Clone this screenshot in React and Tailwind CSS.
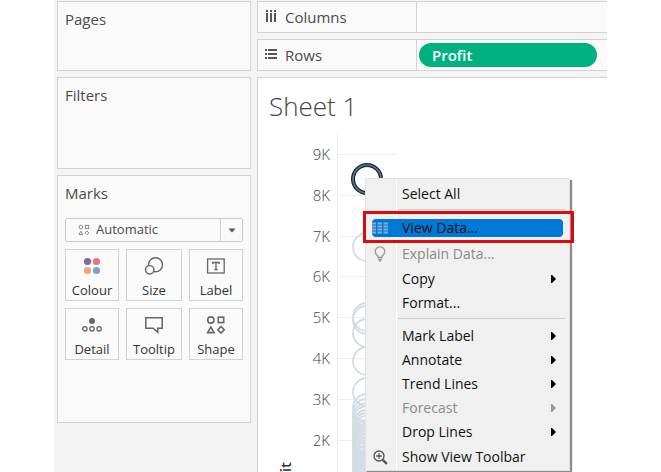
import React from "react";

const panel = "border border-[#d2d2d2] bg-[#fafafa]";
const heading = "text-[15px] leading-5 text-[#4a4a4a]";

function ShapesIcon({ size, stroke }) {
  return (
    <svg width={size} height={size} viewBox="0 0 20 20" fill="none" stroke={stroke} strokeWidth="1.6">
      <circle cx="4.8" cy="5" r="3.1" />
      <rect x="12.3" y="2.2" width="5.4" height="5.4" />
      <path d="M4.8 12 L8 17.6 H1.6 Z" />
      <path d="M15 11.6 L18.2 14.8 L15 18 L11.8 14.8 Z" />
    </svg>
  );
}

function ColourIcon() {
  return (
    <svg width="20" height="20" viewBox="0 0 20 20">
      <circle cx="5.5" cy="5.5" r="3.6" fill="#7f6a9d" />
      <circle cx="14.5" cy="5.5" r="3.6" fill="#f56e81" />
      <circle cx="5.5" cy="14.5" r="3.6" fill="#f5a27c" />
      <circle cx="14.5" cy="14.5" r="3.6" fill="#7da0c9" />
    </svg>
  );
}

function SizeIcon() {
  return (
    <svg width="20" height="20" viewBox="0 0 20 20" fill="none" stroke="#666" strokeWidth="1.4">
      <circle cx="11.5" cy="8.8" r="7" />
      <circle cx="5.7" cy="13.8" r="4.2" fill="#fafafa" />
    </svg>
  );
}

function LabelIcon() {
  return (
    <svg width="20" height="20" viewBox="0 0 20 20" fill="none" stroke="#666" strokeWidth="1.3">
      <rect x="1.6" y="3" width="16.6" height="14" />
      <path d="M6.8 8 V6.5 H13.2 V8 M10 6.5 V13.5 M8.4 13.5 H11.6" />
    </svg>
  );
}

function DetailIcon() {
  return (
    <svg width="20" height="20" viewBox="0 0 20 20" fill="none" stroke="#666" strokeWidth="1.3">
      <circle cx="10" cy="6" r="3" fill="#666" stroke="none" />
      <circle cx="2.9" cy="13.8" r="2.2" />
      <circle cx="10" cy="13.8" r="2.2" />
      <circle cx="17.1" cy="13.8" r="2.2" />
    </svg>
  );
}

function TooltipIcon() {
  return (
    <svg width="20" height="20" viewBox="0 0 20 20" fill="none" stroke="#666" strokeWidth="1.5">
      <path d="M1.8 2.7 H18.2 V13.2 H13.8 V17.4 L9.2 13.2 H1.8 Z" />
    </svg>
  );
}

const marks = [
  ["Colour", <ColourIcon />],
  ["Size", <SizeIcon />],
  ["Label", <LabelIcon />],
  ["Detail", <DetailIcon />],
  ["Tooltip", <TooltipIcon />],
  ["Shape", <ShapesIcon size={20} stroke="#666" />],
];

function Marks() {
  return (
    <section className={`${panel} min-h-[248px] px-[7px] pt-[7px]`}>
      <h2 className={heading}>Marks</h2>
      <div className="relative mt-[15px]">
        <select
          aria-label="Mark type"
          className="block h-6 w-full appearance-none rounded-xs border border-[#cacaca] bg-[#fafafa] pl-[30px] text-[13px] text-[#4a4a4a]"
        >
          <option>Automatic</option>
        </select>
        <span className="pointer-events-none absolute inset-y-0 left-[13px] flex items-center">
          <ShapesIcon size={12} stroke="#888" />
        </span>
        <span className="pointer-events-none absolute inset-y-px right-px flex w-[22px] items-center justify-center border-l border-[#d2d2d2]">
          <svg width="8" height="5" viewBox="0 0 8 5">
            <path d="M0.5 0.5 H7.5 L4 4.5 Z" fill="#555" />
          </svg>
        </span>
      </div>
      <div className="mt-[7px] grid grid-cols-[54fr_56fr_54fr] gap-[7px]">
        {marks.map(([name, icon]) => (
          <button
            key={name}
            type="button"
            className="flex h-[52px] flex-col items-center justify-between border border-[#d2d2d2] bg-[#fafafa] pt-[6px] text-[13px] leading-5 text-[#333]"
          >
            {icon}
            {name}
          </button>
        ))}
      </div>
    </section>
  );
}

function Shelf({ name, icon, children }) {
  return (
    <div className="flex h-8 border border-r-0 border-[#d2d2d2] bg-[#fafafa]">
      <div className="flex w-[159px] items-center gap-2 border-r border-[#d2d2d2] pl-[7px] text-[15px] leading-5 text-[#4a4a4a]">
        {icon}
        {name}
      </div>
      <div className="flex flex-1 items-center pr-[10px] pl-[2px]">{children}</div>
    </div>
  );
}

function ColumnsIcon() {
  return (
    <svg width="12" height="14" viewBox="0 0 12 14" fill="#555">
      {[1, 5, 9].map((x) => (
        <g key={x}>
          <rect x={x} y="0" width="2" height="2" />
          <rect x={x} y="3" width="2" height="9" />
        </g>
      ))}
    </svg>
  );
}

function RowsIcon() {
  return (
    <svg width="12" height="14" viewBox="0 0 12 14" fill="#555">
      {[1, 5, 9].map((y) => (
        <g key={y}>
          <rect x="0" y={y} width="2" height="2" />
          <rect x="3" y={y} width="9" height="2" />
        </g>
      ))}
    </svg>
  );
}

const ticks = [
  ["9K", 25],
  ["8K", 66],
  ["7K", 107],
  ["6K", 147],
  ["5K", 188],
  ["4K", 229],
  ["3K", 270],
  ["2K", 311],
];

const points = [118, 188, 191, 204, 232, 263, 279, 284, 288, 291, 295, 298, 301, 305, 309, 312, 315, 319, 323, 327, 331, 335, 339, 343];

function Chart() {
  return (
    <svg
      width="160"
      height="343"
      viewBox="0 0 160 343"
      className="block font-['Open_Sans','Noto_Sans',sans-serif]"
      fill="none"
    >
      <path d="M79.5 4 V343" stroke="#efefef" />
      {ticks.map(([label, y]) => (
        <g key={label}>
          <path d={`M79 ${y + 0.5} H139`} stroke="#efefef" />
          <text x="72" y={y + 6} textAnchor="end" fontSize="15" fontWeight="300" fill="#444">
            {label}
          </text>
        </g>
      ))}
      <rect x="95" y="322" width="28" height="21" fill="#c3d1df" opacity="0.7" />
      <rect x="95" y="290" width="12" height="34" fill="#c8d3de" opacity="0.5" />
      {points.map((y) => (
        <circle key={y} cx="109" cy={y} r="14" stroke="#d3dce5" strokeWidth="1.8" />
      ))}
      <circle cx="109" cy="50" r="14" stroke="#16222f" strokeWidth="4" />
      <circle cx="109" cy="50" r="14" stroke="#56779a" strokeWidth="1.6" />
      <text transform="translate(33 333) rotate(-90)" textAnchor="end" fontSize="15" fontWeight="600" fill="#333">
        Profit
      </text>
    </svg>
  );
}

function TableIcon() {
  return (
    <svg width="16" height="12" viewBox="0 0 16 12">
      <path
        d="M0 1.5 H4 M5.5 1.5 H10 M11.5 1.5 H16 M0 4.5 H4 M5.5 4.5 H10 M11.5 4.5 H16 M0 7.5 H4 M5.5 7.5 H10 M11.5 7.5 H16 M0 10.5 H4 M5.5 10.5 H10 M11.5 10.5 H16"
        stroke="#86a9cc"
        strokeWidth="1.8"
      />
    </svg>
  );
}

function BulbIcon() {
  return (
    <svg width="12" height="16" viewBox="0 0 12 16" fill="none" stroke="#999" strokeWidth="1.3">
      <path d="M4 11.5 V10.2 C2.4 9 1.2 7.6 1.2 5.6 A4.8 4.8 0 0 1 10.8 5.6 C10.8 7.6 9.6 9 8 10.2 V11.5 Z" />
      <path d="M4 13.5 H8 M5 15.2 H7" />
    </svg>
  );
}

function ZoomIcon() {
  return (
    <svg width="15" height="15" viewBox="0 0 15 15" fill="none" stroke="#555">
      <circle cx="6" cy="6" r="5" strokeWidth="1.4" />
      <path d="M3.2 6 H8.8 M6 3.2 V8.8" strokeWidth="1.3" />
      <path d="M9.8 9.8 L13.8 13.8" strokeWidth="2.4" />
    </svg>
  );
}

function Item({ children, icon, sub, off, active }) {
  return (
    <button
      type="button"
      role="menuitem"
      disabled={off}
      className={`relative flex w-full items-center text-left ${icon ? "h-[26px]" : "h-6"} ${off ? "text-[#8a8a8a]" : "text-[#111]"}`}
    >
      <span
        className={`mx-[6px] flex flex-1 items-center rounded-sm leading-[18px] ${active ? "bg-[#0078d7]" : ""}`}
      >
        <span className="flex w-[30px] items-center justify-center pr-[14px]">{icon}</span>
        <span className="flex-1">{children}</span>
        {sub && (
          <svg width="5" height="8" viewBox="0 0 5 8" className="mr-[7px]">
            <path d="M0 0 H1 L5 4 L1 8 H0 Z" fill={off ? "#999" : "#000"} />
          </svg>
        )}
      </span>
      {active && (
        <span className="pointer-events-none absolute -top-1 -right-[5px] -bottom-[2px] -left-[3px] border-3 border-[#dc0a0f]" />
      )}
    </button>
  );
}

function Separator() {
  return (
    <div role="separator" className="h-[9px] pt-[3px] pr-1 pl-8">
      <div className="border-t border-[#d0d0d0]" />
    </div>
  );
}

function ContextMenu() {
  return (
    <div
      role="menu"
      className="absolute top-[100px] left-[107px] w-[205px] border border-[#e2e2e2] bg-[#f0f0f0] pt-[3px] font-['Open_Sans','Noto_Sans',sans-serif] text-[14px] shadow-[2px_2px_1px_#8c8c8c]"
    >
      <span className="absolute inset-y-0 left-[30px] w-px bg-white" />
      <Item>Select All</Item>
      <Separator />
      <Item icon={<TableIcon />} active>View Data...</Item>
      <Item icon={<BulbIcon />} off>Explain Data...</Item>
      <Item sub>Copy</Item>
      <Item>Format...</Item>
      <Separator />
      <Item sub>Mark Label</Item>
      <Item sub>Annotate</Item>
      <Item sub>Trend Lines</Item>
      <Item sub off>Forecast</Item>
      <Item sub>Drop Lines</Item>
      <Item icon={<ZoomIcon />}>Show View Toolbar</Item>
    </div>
  );
}

export default function App() {
  return (
    <div className="h-screen overflow-hidden bg-white px-[54px] font-['Open_Sans','Noto_Sans',sans-serif]">
      <main className="flex h-full gap-[6px] bg-[#f4f4f4] pt-px pl-[3px]">
        <aside className="flex w-[194px] shrink-0 flex-col gap-[6px]">
          <section className={`${panel} min-h-[70px] px-[7px] pt-[7px]`}>
            <h2 className={heading}>Pages</h2>
          </section>
          <section className={`${panel} min-h-[92px] px-[7px] pt-[7px]`}>
            <h2 className={heading}>Filters</h2>
          </section>
          <Marks />
        </aside>
        <div className="flex min-w-0 flex-1 flex-col gap-[6px]">
          <Shelf name="Columns" icon={<ColumnsIcon />} />
          <Shelf name="Rows" icon={<RowsIcon />}>
            <button
              type="button"
              className="h-6 w-full rounded-full bg-[#00b180] pl-[13px] text-left text-[15px] leading-5 font-semibold text-white"
            >
              Profit
            </button>
          </Shelf>
          <section className="relative min-h-0 flex-1 border-t border-l border-[#d2d2d2] bg-white">
            <h1 className="h-[51px] pt-[10px] pl-[11px] text-[26px] leading-9 font-light text-[#444]">Sheet 1</h1>
            <Chart />
            <ContextMenu />
          </section>
        </div>
      </main>
    </div>
  );
}
